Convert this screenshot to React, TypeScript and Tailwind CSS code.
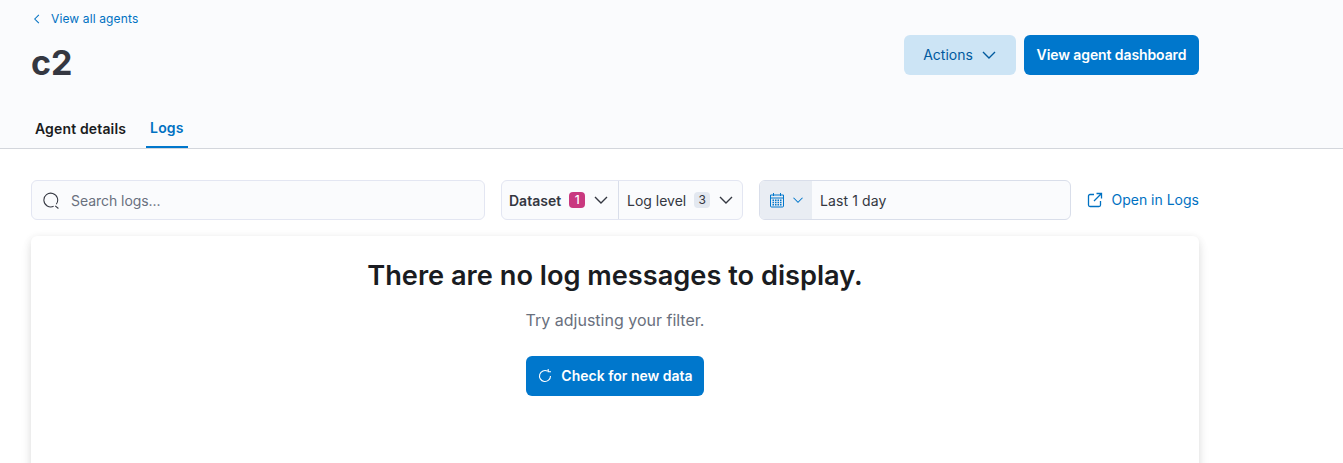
import React from 'react';

const Chevron = ({ className = '' }: { className?: string }) => (
  <svg viewBox="0 0 16 16" fill="none" stroke="currentColor" strokeWidth="1.4" className={className}>
    <path d="M2 5l6 6 6-6" />
  </svg>
);

const FilterButton = ({ label, count, active }: { label: string; count: string; active?: boolean }) => (
  <div className={`flex items-center h-full ${active ? 'w-[116px] pl-[7px] font-semibold' : 'flex-1 pl-[8px] border-l border-[#d9deea]'}`}>
    <span className="text-[14px] text-[#343741]">{label}</span>
    <span
      className={`ml-[8px] w-[16px] h-[16px] rounded-[4px] flex items-center justify-center text-[12px] ${
        active ? 'bg-[#c9387f] text-white font-medium' : 'bg-[#e3e8f0] text-[#343741] font-normal'
      }`}
    >
      {count}
    </span>
    <Chevron className="ml-[8px] w-[16px] h-[16px] text-[#343741]" />
  </div>
);

export default function App() {
  return (
    <div className="h-[463px] overflow-hidden bg-white font-['Inter',sans-serif] text-[#343741]">
      <header className="h-[149px] bg-[#fafbfd] border-b border-[#d3d6dc] pl-[31px] pr-[144px]">
        <div className="flex justify-between h-[104px]">
          <div>
            <a className="flex items-center h-[12px] mt-[13px] text-[12px] tracking-[0.13px] text-[#0071c2]">
              <svg viewBox="0 0 16 16" fill="none" stroke="currentColor" strokeWidth="1.4" className="w-[12px] h-[12px]">
                <path d="M10.5 2.5 5 8l5.5 5.5" />
              </svg>
              <span className="ml-[8px]">View all agents</span>
            </a>
            <h1 className="mt-[18px] text-[34px] leading-[40px] font-bold text-[#343741]">c2</h1>
          </div>
          <div className="flex gap-[8px] mt-[35px] h-[40px]">
            <button className="w-[112px] rounded-[6px] bg-[#cce4f5] text-[#005a9e] text-[14px] flex items-center justify-center">
              <span className="pb-[1px]">Actions</span>
              <Chevron className="ml-[8px] w-[16px] h-[16px]" />
            </button>
            <button className="w-[175px] rounded-[6px] bg-[#0077cc] text-white text-[14px] font-semibold tracking-[-0.1px] pb-[1px]">
              View agent dashboard
            </button>
          </div>
        </div>
        <nav className="flex gap-[16px] h-[44px] pt-[4px] text-[14px] font-semibold tracking-[0.15px]">
          <div className="px-[4px] flex items-center text-[#1a1c21]">Agent details</div>
          <div className="px-[4px] flex items-center text-[#0071c2] border-b-2 border-[#0077cc]">Logs</div>
        </nav>
      </header>

      <main className="pl-[31px] pr-[144px] pt-[31px]">
        <div className="flex items-center h-[40px]">
          <div className="w-[454px] h-full rounded-[6px] border border-[#e3e6f2] bg-[#fafbfd] flex items-center pl-[11px]">
            <svg viewBox="0 0 16 16" fill="none" stroke="#343741" strokeWidth="1" className="w-[17px] h-[17px]">
              <path d="M11.5 13 14.5 15.5M10 13.5A6.5 6.5 0 1 1 12.5 11.5" />
            </svg>
            <span className="ml-[11px] text-[14px] tracking-[-0.05px] text-[#69707d]">Search logs...</span>
          </div>

          <div className="ml-[16px] w-[242px] h-full rounded-[6px] border border-[#e3e6f2] bg-[#fafbfd] flex items-center">
            <FilterButton label="Dataset" count="1" active />
            <FilterButton label="Log level" count="3" />
          </div>

          <div className="ml-[16px] w-[312px] h-full rounded-[6px] border border-[#d9deea] bg-[#fafbfd] flex items-center overflow-hidden">
            <div className="w-[52px] h-full bg-[#e9edf3] flex items-center pl-[9px] text-[#0077cc]">
              <svg viewBox="0 0 16 16" fill="none" stroke="currentColor" strokeWidth="1" className="w-[16px] h-[16px]">
                <path d="M1.5 3h13a.5.5 0 0 1 0 0v11a1 1 0 0 1-1 1h-11a1 1 0 0 1-1-1zM1.5 6h13M4.5 1v3M11.5 1v3" />
                <path strokeWidth="1.4" strokeDasharray="1.5 1" d="M3.5 8.2h9M3.5 10.5h9M3.5 12.8h9" />
              </svg>
              <Chevron className="ml-[7px] w-[12px] h-[12px]" />
            </div>
            <span className="ml-[8px] text-[14px] tracking-[0.1px] text-[#343741]">Last 1 day</span>
          </div>

          <a className="ml-auto flex items-center text-[14px] text-[#0071c2]">
            <svg viewBox="0 0 16 16" fill="none" stroke="currentColor" strokeWidth="1.3" className="w-[16px] h-[16px]">
              <path d="M7 2.5H3a1.5 1.5 0 0 0-1.5 1.5v9A1.5 1.5 0 0 0 3 14.5h9a1.5 1.5 0 0 0 1.5-1.5V9M9.5 1.5h5v5M14.5 1.5 7 9" />
            </svg>
            <span className="ml-[8px] pb-[1px]">Open in Logs</span>
          </a>
        </div>

        <section className="mt-[16px] h-[300px] rounded-[6px] bg-white shadow-[0_2px_8px_rgba(0,0,0,0.1),0_6px_14px_rgba(0,0,0,0.06)] flex flex-col items-center pt-[20px]">
          <h2 className="text-[27.2px] leading-[40px] font-semibold text-[#1a1c21]">There are no log messages to display.</h2>
          <p className="mt-[12px] text-[16px] leading-[24px] text-[#69707d]">Try adjusting your filter.</p>
          <button className="mt-[24px] w-[178px] h-[40px] rounded-[6px] bg-[#0077cc] text-white text-[14px] font-semibold flex items-center justify-center">
            <svg viewBox="0 0 16 16" fill="none" stroke="currentColor" strokeWidth="1.1" className="w-[16px] h-[16px]">
              <path d="M13.5 8A5.5 5.5 0 1 1 10.5 3.1M11.2 1v2.8H14" />
            </svg>
            <span className="ml-[8px] pb-[1px]">Check for new data</span>
          </button>
        </section>
      </main>
    </div>
  );
}
